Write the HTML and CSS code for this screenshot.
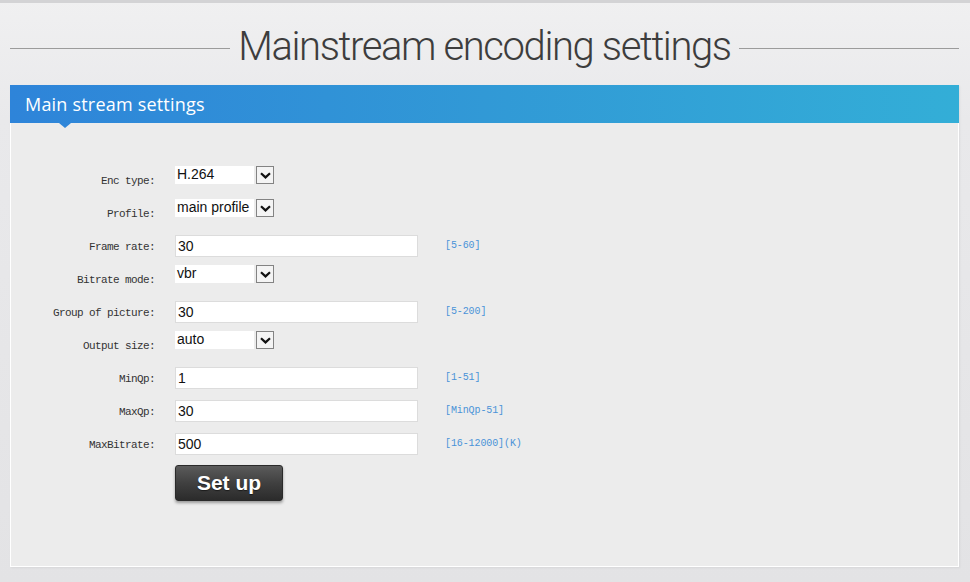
FILE: index.html
```html
<!DOCTYPE html>
<html lang="en">
<head>
<meta charset="utf-8">
<title>Mainstream encoding settings</title>
<link rel="stylesheet" href="styles.css">
</head>
<body>
<div class="page">
  <div class="title-row">
    <span class="rule"></span>
    <h1 class="title">Mainstream encoding settings</h1>
    <span class="rule"></span>
  </div>
  <section class="panel">
    <div class="panel-head">
      <h2 class="panel-title">Main stream settings</h2>
      <span class="pointer"></span>
    </div>
    <div class="panel-body">
      <div class="form">
        <label class="lbl">Enc type:</label>
        <div class="select"><span class="select-value">H.264</span><span class="select-btn"><svg width="11" height="7" viewBox="0 0 11 7"><path d="M1 1.2 L5.5 5.4 L10 1.2" fill="none" stroke="#111" stroke-width="2.2"/></svg></span></div>
        <span class="hint"></span>

        <label class="lbl">Profile:</label>
        <div class="select"><span class="select-value">main profile</span><span class="select-btn"><svg width="11" height="7" viewBox="0 0 11 7"><path d="M1 1.2 L5.5 5.4 L10 1.2" fill="none" stroke="#111" stroke-width="2.2"/></svg></span></div>
        <span class="hint"></span>

        <label class="lbl">Frame rate:</label>
        <div class="input">30</div>
        <span class="hint">[5-60]</span>

        <label class="lbl">Bitrate mode:</label>
        <div class="select"><span class="select-value">vbr</span><span class="select-btn"><svg width="11" height="7" viewBox="0 0 11 7"><path d="M1 1.2 L5.5 5.4 L10 1.2" fill="none" stroke="#111" stroke-width="2.2"/></svg></span></div>
        <span class="hint"></span>

        <label class="lbl">Group of picture:</label>
        <div class="input">30</div>
        <span class="hint">[5-200]</span>

        <label class="lbl">Output size:</label>
        <div class="select"><span class="select-value">auto</span><span class="select-btn"><svg width="11" height="7" viewBox="0 0 11 7"><path d="M1 1.2 L5.5 5.4 L10 1.2" fill="none" stroke="#111" stroke-width="2.2"/></svg></span></div>
        <span class="hint"></span>

        <label class="lbl">MinQp:</label>
        <div class="input">1</div>
        <span class="hint">[1-51]</span>

        <label class="lbl">MaxQp:</label>
        <div class="input">30</div>
        <span class="hint">[MinQp-51]</span>

        <label class="lbl">MaxBitrate:</label>
        <div class="input">500</div>
        <span class="hint">[16-12000](K)</span>

        <span class="lbl"></span>
        <div class="actions"><button class="btn" type="button">Set up</button></div>
        <span class="hint"></span>
      </div>
    </div>
  </section>
</div>
</body>
</html>
```

FILE: styles.css
```css
html, body {
  margin: 0;
  padding: 0;
}
body {
  width: 970px;
  height: 582px;
  overflow: hidden;
  background: linear-gradient(to bottom, #f0f0f1 0px, #e9e9eb 120px, #e3e3e5 582px);
  border-top: 3px solid #d3d3d5;
  box-sizing: border-box;
  font-family: "Liberation Sans", Arial, sans-serif;
}
.page {
  padding: 0 11px 0 10px;
}
.title-row {
  display: flex;
  align-items: center;
  gap: 8px;
  height: 82px;
  padding-top: 6px;
  box-sizing: border-box;
}
.rule {
  flex: 1;
  height: 1px;
  background: #9b9b9b;
  margin-top: 3px;
}
.title {
  margin: 0;
  font-family: Roboto, "Liberation Sans", sans-serif;
  font-weight: 300;
  font-size: 40px;
  letter-spacing: -1.4px;
  color: #3d3d3d;
  line-height: 48px;
}
.panel {
  background: #ececec;
  border: 1px solid #ffffff;
  border-top: none;
  height: 482px;
  box-sizing: border-box;
  box-shadow: 1px 1px 2px rgba(0,0,0,0.06);
}
.panel-head {
  position: relative;
  height: 38px;
  margin: 0 -1px;
  background: linear-gradient(to right, #2e84d9 0%, #3199d6 50%, #33aed7 100%);
  display: flex;
  align-items: center;
  padding-left: 15px;
}
.panel-title {
  margin: 0;
  font-family: "Open Sans", "Noto Sans", sans-serif;
  font-weight: 400;
  font-size: 18px;
  color: #ffffff;
  letter-spacing: 0.2px;
}
.pointer {
  position: absolute;
  left: 49px;
  bottom: -5px;
  width: 0;
  height: 0;
  border-left: 6px solid transparent;
  border-right: 6px solid transparent;
  border-top: 5px solid #2f86d9;
}
.panel-body {
  padding-top: 46px;
}
.form {
  display: grid;
  grid-template-columns: 144px 243px auto;
  grid-auto-rows: 21px;
  column-gap: 20px;
  row-gap: 12px;
}
.form .hint {
  margin-left: 7px;
}
.lbl {
  font-family: "Liberation Mono", "DejaVu Sans Mono", monospace;
  font-size: 11px;
  letter-spacing: -0.6px;
  color: #333333;
  text-align: right;
  align-self: center;
  padding-top: 2px;
}
.hint {
  font-family: "Liberation Mono", "DejaVu Sans Mono", monospace;
  font-size: 10px;
  letter-spacing: -0.1px;
  color: #4a93d8;
  align-self: center;
}
.input {
  background: #ffffff;
  border: 1px solid #dcdcdc;
  box-sizing: border-box;
  height: 22px;
  font-size: 14px;
  line-height: 20px;
  padding-left: 2px;
  color: #111;
}
.select {
  display: flex;
  align-self: start;
  margin-top: -3px;
  height: 18px;
}
.select-value {
  width: 79px;
  height: 18px;
  background: #ffffff;
  font-size: 14px;
  line-height: 17px;
  padding-left: 2px;
  box-sizing: border-box;
  color: #111;
  white-space: nowrap;
  overflow: hidden;
}
.select-btn {
  margin-left: 2px;
  width: 18px;
  height: 18px;
  box-sizing: border-box;
  border: 1px solid #838383;
  background: #f4f4f4;
  display: flex;
  align-items: center;
  justify-content: center;
}
.actions {
  grid-row: span 2;
}
.btn {
  width: 108px;
  height: 36px;
  border: 1px solid #2a2a2a;
  border-radius: 3px;
  background: linear-gradient(to bottom, #5b5b5b 0%, #404040 50%, #2b2b2b 100%);
  box-shadow: 0 2px 3px rgba(0,0,0,0.35);
  color: #ffffff;
  font-family: "Liberation Sans", Arial, sans-serif;
  font-weight: 700;
  font-size: 21px;
  text-shadow: 0 1px 1px rgba(0,0,0,0.5);
  padding: 0;
  margin-top: -1px;
}
```
